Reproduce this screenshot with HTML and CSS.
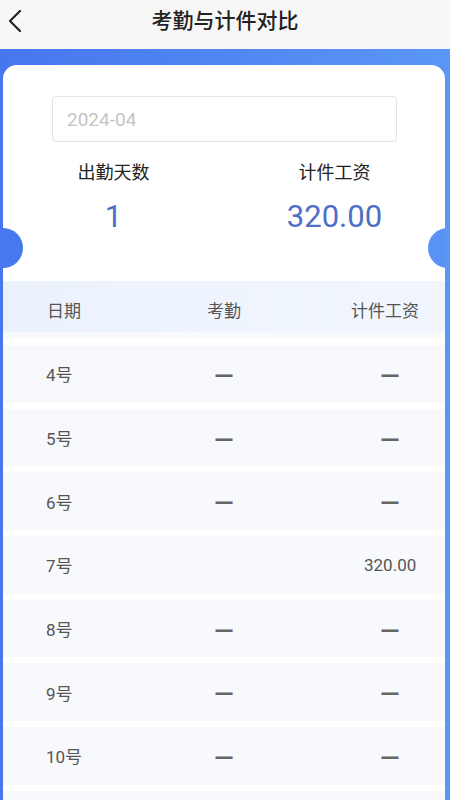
FILE: index.html
```html
<!DOCTYPE html>
<html lang="zh-CN">
<head>
<meta charset="utf-8">
<meta name="viewport" content="width=450">
<title>考勤与计件对比</title>
<link rel="stylesheet" href="styles.css">
</head>
<body>
<header class="navbar">
  <span class="back">
    <svg width="16" height="24" viewBox="0 0 16 24"><path d="M13 2 L3 12 L13 22" fill="none" stroke="#222" stroke-width="2.2" stroke-linecap="round" stroke-linejoin="round"/></svg>
  </span>
  <h1 class="title">考勤与计件对比</h1>
</header>
<main class="band">
  <section class="card">
    <span class="notch notch-left"></span>
    <span class="notch notch-right"></span>
    <div class="date-input">2024-04</div>
    <div class="stats">
      <div class="stat">
        <div class="stat-label">出勤天数</div>
        <div class="stat-value">1</div>
      </div>
      <div class="stat">
        <div class="stat-label">计件工资</div>
        <div class="stat-value">320.00</div>
      </div>
    </div>
    <div class="thead">
      <span class="c1">日期</span>
      <span class="c2">考勤</span>
      <span class="c3">计件工资</span>
    </div>
    <div class="rows">
      <div class="row partial"></div>
      <div class="row"><span class="c1 num">4号</span><span class="c2 dash">—</span><span class="c3 dash">—</span></div>
      <div class="row"><span class="c1 num">5号</span><span class="c2 dash">—</span><span class="c3 dash">—</span></div>
      <div class="row"><span class="c1 num">6号</span><span class="c2 dash">—</span><span class="c3 dash">—</span></div>
      <div class="row"><span class="c1 num">7号</span><span class="c2"></span><span class="c3 num val">320.00</span></div>
      <div class="row"><span class="c1 num">8号</span><span class="c2 dash">—</span><span class="c3 dash">—</span></div>
      <div class="row"><span class="c1 num">9号</span><span class="c2 dash">—</span><span class="c3 dash">—</span></div>
      <div class="row"><span class="c1 num">10号</span><span class="c2 dash">—</span><span class="c3 dash">—</span></div>
      <div class="row"></div>
    </div>
  </section>
</main>
</body>
</html>
```
FILE: styles.css
```css
* { box-sizing: border-box; }
html, body { margin: 0; padding: 0; }
body {
  width: 450px;
  height: 800px;
  overflow: hidden;
  background: #f7f7f7;
  font-family: Roboto, "Noto Sans CJK SC", sans-serif;
  color: #222;
}
.navbar {
  height: 49px;
  background: #f7f7f7;
  display: flex;
  align-items: center;
  justify-content: center;
  position: relative;
}
.back {
  position: absolute;
  left: 7px;
  top: 9px;
  width: 16px;
  height: 24px;
  display: flex;
}
.title {
  margin: 0;
  font-family: "Noto Sans CJK SC", sans-serif;
  font-size: 21px;
  font-weight: 500;
  color: #222;
  line-height: 40px;
  margin-top: -12px;
}
.band {
  background: linear-gradient(90deg, #4776ee 0%, #5a96f6 100%);
  padding: 16px 5px 0 3px;
  height: 751px;
}
.card {
  position: relative;
  background: #fff;
  border-radius: 14px 14px 0 0;
  height: 100%;
  padding-top: 31px;
  overflow: hidden;
}
.notch {
  position: absolute;
  top: 163px;
  width: 40px;
  height: 40px;
  border-radius: 50%;
}
.notch-left { left: -20px; background: #4878ee; }
.notch-right { right: -23px; background: #5893f5; }
.date-input {
  margin: 0 48px 0 49px;
  height: 46px;
  border: 1px solid #e3e3e3;
  border-radius: 4px;
  padding-left: 14px;
  display: flex;
  align-items: center;
  font-family: Roboto, "Noto Sans CJK SC", sans-serif;
  font-size: 19px;
  color: #c4c4c4;
}
.stats {
  display: grid;
  grid-template-columns: 1fr 1fr;
  margin-top: 16px;
}
.stat { text-align: center; }
.stat-label {
  font-family: "Noto Sans CJK SC", sans-serif;
  font-size: 18px;
  line-height: 26px;
  color: #222;
}
.stat-value {
  margin-top: 13px;
  font-family: Roboto, sans-serif;
  font-size: 31px;
  line-height: 40px;
  color: #4d6fc5;
}
.thead {
  margin-top: 44px;
  height: 51px;
  padding-top: 5px;
  background: linear-gradient(90deg, #ecf2fc 0%, #f1f6fe 100%);
  display: grid;
  grid-template-columns: 114px 1fr 114px;
  align-items: center;
  font-family: "Noto Sans CJK SC", sans-serif;
  font-size: 17px;
  color: #555;
}
.c1, .c2, .c3 { text-align: center; }
.thead .c1 { text-align: left; padding-left: 44px; }
.thead .c3 { text-align: left; padding-left: 20px; }
.rows {
  display: flex;
  flex-direction: column;
  gap: 6px;
}
.row {
  height: 57.7px;
  flex: none;
  background: #f7f9fd;
  display: grid;
  grid-template-columns: 114px 1fr 114px;
  align-items: center;
  font-size: 17px;
  color: #555;
}
.row.partial { height: 6px; margin-bottom: 1px; }
.num {
  font-family: Roboto, "Noto Sans CJK SC", sans-serif;
  color: #555;
}
.c1.num { text-align: left; padding-left: 43px; }
.dash {
  font-family: "DejaVu Sans", sans-serif;
  font-size: 19px;
  font-weight: bold;
  color: #666;
}
.c3.dash { padding-left: 4px; }
.c3.val { text-align: left; padding-left: 33px; }
```
